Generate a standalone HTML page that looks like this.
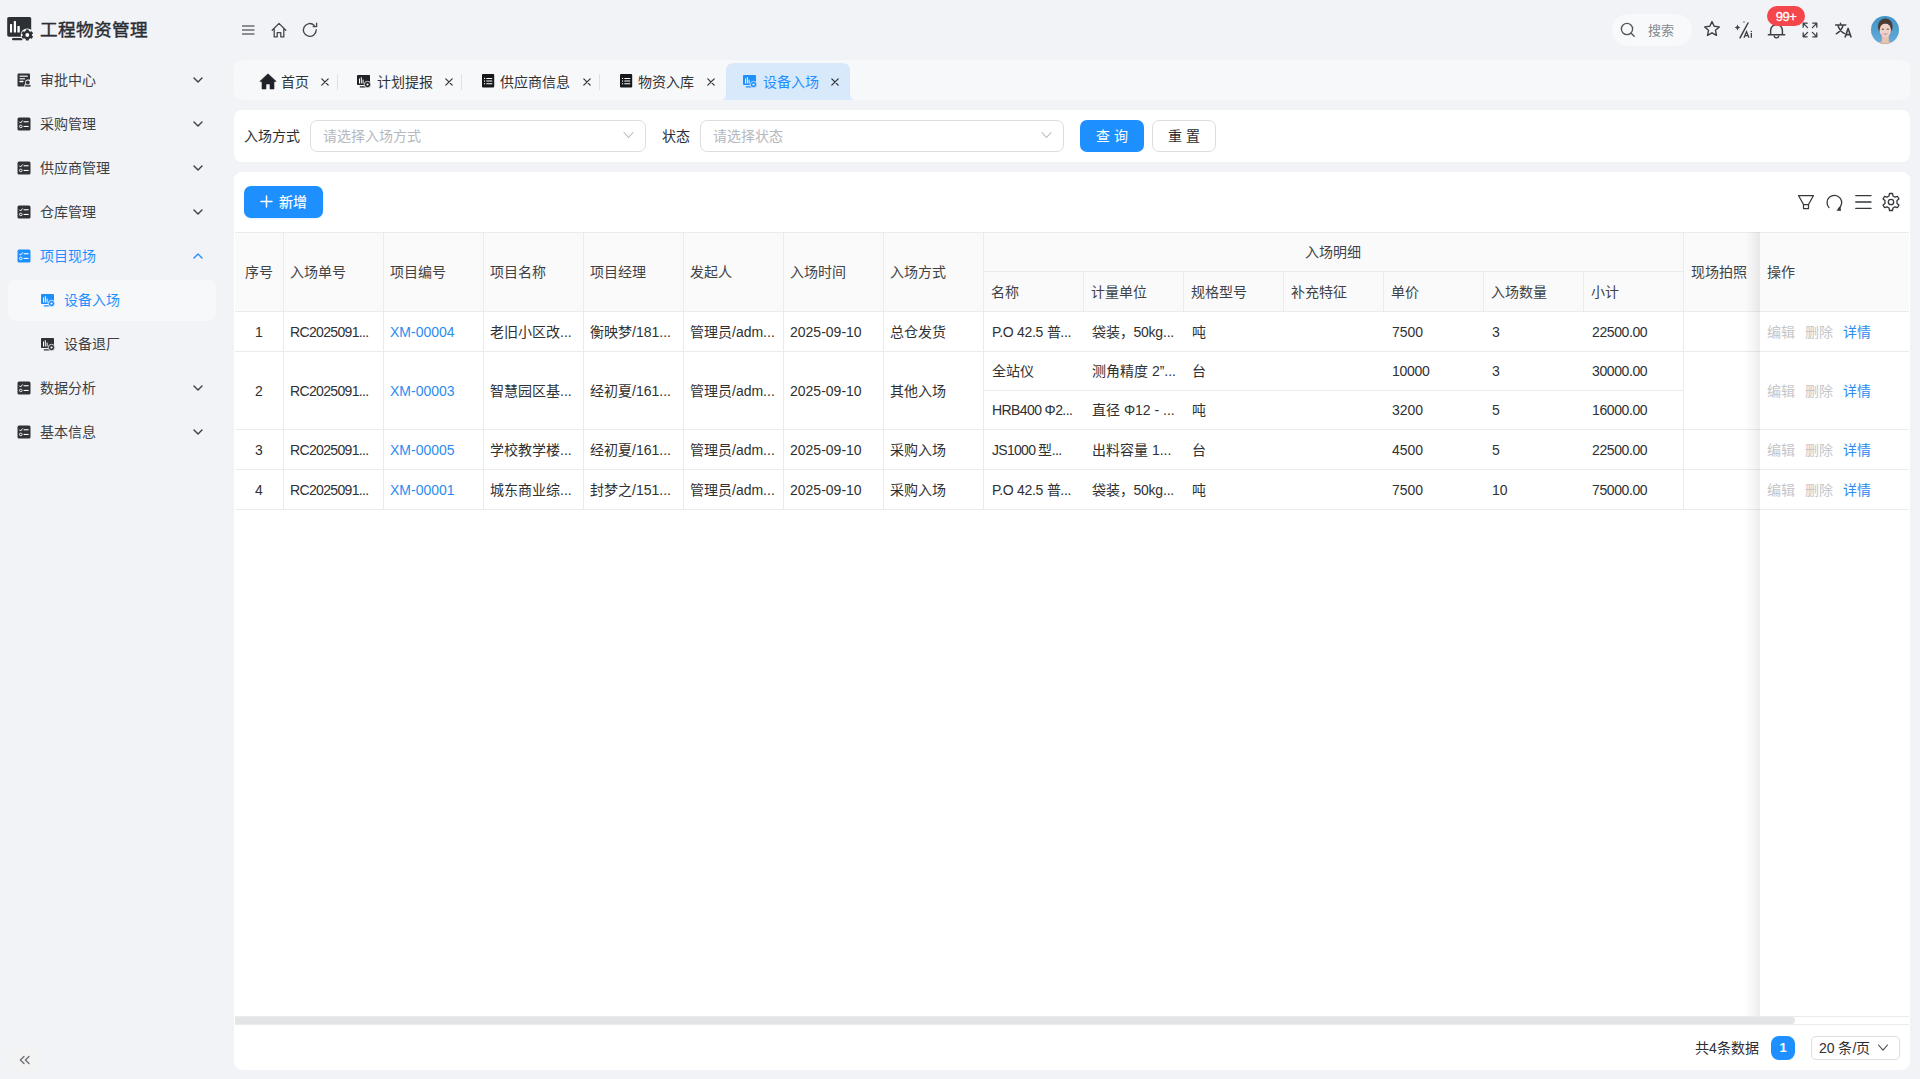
<!DOCTYPE html><html lang="zh-CN"><head><meta charset="utf-8"><style>
html,body{margin:0;padding:0;}
body{width:1920px;height:1079px;overflow:hidden;background:#f2f3f7;font-family:"Liberation Sans",sans-serif;position:relative;}
.t{position:absolute;white-space:nowrap;}
.r{position:absolute;}
.i{position:absolute;overflow:visible;}
</style></head><body>
<svg class="i" style="left:7px;top:17px;" width="27" height="25" viewBox="0 0 27 25"><rect x="0.2" y="0" width="24" height="19.7" rx="1.6" fill="#2d3136"/><rect x="3" y="7" width="2.1" height="8.5" rx="0.6" fill="#fff"/><rect x="6.8" y="4" width="2.2" height="11.5" rx="0.6" fill="#fff"/><rect x="10.4" y="9" width="2.4" height="6.5" rx="0.6" fill="#fff"/><rect x="5" y="21" width="11" height="2.3" rx="1.1" fill="#2d3136"/><g transform="translate(20.3,18)"><circle r="6.6" fill="#f2f3f7"/><path d="M-1.3 -5.4 L1.3 -5.4 L1.7 -3.9 L3 -3.2 L4.5 -3.8 L5.8 -1.6 L4.6 -0.6 L4.6 0.6 L5.8 1.6 L4.5 3.8 L3 3.2 L1.7 3.9 L1.3 5.4 L-1.3 5.4 L-1.7 3.9 L-3 3.2 L-4.5 3.8 L-5.8 1.6 L-4.6 0.6 L-4.6 -0.6 L-5.8 -1.6 L-4.5 -3.8 L-3 -3.2 L-1.7 -3.9 Z" fill="#2d3136"/><circle r="1.9" fill="#fff"/></g></svg>
<div class="t" style="left:40px;top:19.5px;height:20px;line-height:20px;font-size:17.6px;color:#2a2d31;font-weight:normal;-webkit-text-stroke:0.45px #2a2d31;">工程物资管理</div>
<svg class="i" style="left:17px;top:73px;" width="14" height="14" viewBox="0 0 14 14"><path d="M1.5 0.5 H12 Q13 0.5 13 1.5 V6.6 H10.6 Q8.2 6.6 8.2 9 V11.2 H7.4 V13.6 H1.5 Q0.5 13.6 0.5 12.6 V1.5 Q0.5 0.5 1.5 0.5 Z" fill="#2f3236"/><rect x="2.4" y="2.4" width="8.6" height="1.5" rx="0.7" fill="#fff" opacity="0.75"/><rect x="2.4" y="5" width="5.8" height="1.5" rx="0.7" fill="#fff" opacity="0.75"/><rect x="2.4" y="7.8" width="4.2" height="1.4" rx="0.7" fill="#fff"/><circle cx="10.8" cy="9.4" r="1.9" fill="#2f3236"/><rect x="8.2" y="11.8" width="5.3" height="1.9" rx="0.5" fill="#2f3236" opacity="0.85"/></svg>
<div class="t" style="left:40px;top:70.0px;height:20px;line-height:20px;font-size:14px;color:#3b3e42;font-weight:normal;">审批中心</div>
<svg class="i" style="left:192.5px;top:75px;" width="10" height="10" viewBox="0 0 10 10"><path d="M1 3 L5 7 L9 3" fill="none" stroke="#3a3d42" stroke-width="1.4" stroke-linecap="round" stroke-linejoin="round"/></svg>
<svg class="i" style="left:17px;top:117px;" width="14" height="14" viewBox="0 0 14 14"><rect x="0.5" y="0.5" width="13" height="13" rx="1.5" fill="#2f3236"/><path d="M2.6 5 L3.6 6 L5.4 3.8" fill="none" stroke="#fff" stroke-width="1" stroke-linecap="round"/><rect x="6.6" y="4.2" width="5" height="1.1" fill="#fff"/><circle cx="3.8" cy="9.4" r="1.3" fill="none" stroke="#fff" stroke-width="0.9"/><rect x="6.6" y="8.9" width="5" height="1.1" fill="#fff"/></svg>
<div class="t" style="left:40px;top:114.0px;height:20px;line-height:20px;font-size:14px;color:#3b3e42;font-weight:normal;">采购管理</div>
<svg class="i" style="left:192.5px;top:119px;" width="10" height="10" viewBox="0 0 10 10"><path d="M1 3 L5 7 L9 3" fill="none" stroke="#3a3d42" stroke-width="1.4" stroke-linecap="round" stroke-linejoin="round"/></svg>
<svg class="i" style="left:17px;top:161px;" width="14" height="14" viewBox="0 0 14 14"><rect x="0.5" y="0.5" width="13" height="13" rx="1.5" fill="#2f3236"/><path d="M2.6 5 L3.6 6 L5.4 3.8" fill="none" stroke="#fff" stroke-width="1" stroke-linecap="round"/><rect x="6.6" y="4.2" width="5" height="1.1" fill="#fff"/><circle cx="3.8" cy="9.4" r="1.3" fill="none" stroke="#fff" stroke-width="0.9"/><rect x="6.6" y="8.9" width="5" height="1.1" fill="#fff"/></svg>
<div class="t" style="left:40px;top:158.0px;height:20px;line-height:20px;font-size:14px;color:#3b3e42;font-weight:normal;">供应商管理</div>
<svg class="i" style="left:192.5px;top:163px;" width="10" height="10" viewBox="0 0 10 10"><path d="M1 3 L5 7 L9 3" fill="none" stroke="#3a3d42" stroke-width="1.4" stroke-linecap="round" stroke-linejoin="round"/></svg>
<svg class="i" style="left:17px;top:205px;" width="14" height="14" viewBox="0 0 14 14"><rect x="0.5" y="0.5" width="13" height="13" rx="1.5" fill="#2f3236"/><path d="M2.6 5 L3.6 6 L5.4 3.8" fill="none" stroke="#fff" stroke-width="1" stroke-linecap="round"/><rect x="6.6" y="4.2" width="5" height="1.1" fill="#fff"/><circle cx="3.8" cy="9.4" r="1.3" fill="none" stroke="#fff" stroke-width="0.9"/><rect x="6.6" y="8.9" width="5" height="1.1" fill="#fff"/></svg>
<div class="t" style="left:40px;top:202.0px;height:20px;line-height:20px;font-size:14px;color:#3b3e42;font-weight:normal;">仓库管理</div>
<svg class="i" style="left:192.5px;top:207px;" width="10" height="10" viewBox="0 0 10 10"><path d="M1 3 L5 7 L9 3" fill="none" stroke="#3a3d42" stroke-width="1.4" stroke-linecap="round" stroke-linejoin="round"/></svg>
<svg class="i" style="left:17px;top:249px;" width="14" height="14" viewBox="0 0 14 14"><rect x="0.5" y="0.5" width="13" height="13" rx="1.5" fill="#1e8ffe"/><path d="M2.6 5 L3.6 6 L5.4 3.8" fill="none" stroke="#fff" stroke-width="1" stroke-linecap="round"/><rect x="6.6" y="4.2" width="5" height="1.1" fill="#fff"/><circle cx="3.8" cy="9.4" r="1.3" fill="none" stroke="#fff" stroke-width="0.9"/><rect x="6.6" y="8.9" width="5" height="1.1" fill="#fff"/></svg>
<div class="t" style="left:40px;top:246.0px;height:20px;line-height:20px;font-size:14px;color:#1e8ffe;font-weight:normal;">项目现场</div>
<svg class="i" style="left:192.5px;top:251px;" width="10" height="10" viewBox="0 0 10 10"><path d="M1 7 L5 3 L9 7" fill="none" stroke="#1e8ffe" stroke-width="1.4" stroke-linecap="round" stroke-linejoin="round"/></svg>
<div class="r" style="left:8px;top:280px;width:208px;height:41px;background:#f7f8fa;border-radius:8px;"></div>
<svg class="i" style="left:41px;top:294px;" width="14" height="13" viewBox="0 0 14 13"><rect x="0" y="0" width="13" height="10" rx="0.8" fill="#1e8ffe"/><rect x="2" y="3.5" width="1" height="5" fill="#fff"/><rect x="3.8" y="2.2" width="1" height="6.3" fill="#fff"/><rect x="5.6" y="4.6" width="1" height="3.9" fill="#fff"/><rect x="2.6" y="11.2" width="6" height="1.2" rx="0.6" fill="#1e8ffe"/><circle cx="10.5" cy="9.5" r="3.2" fill="#1e8ffe" stroke="#f7f8fa" stroke-width="0.8"/><circle cx="10.5" cy="9.5" r="1.1" fill="#fff"/></svg>
<div class="t" style="left:64px;top:290.0px;height:20px;line-height:20px;font-size:14px;color:#1e8ffe;font-weight:normal;">设备入场</div>
<svg class="i" style="left:41px;top:338px;" width="14" height="13" viewBox="0 0 14 13"><rect x="0" y="0" width="13" height="10" rx="0.8" fill="#2f3236"/><rect x="2" y="3.5" width="1" height="5" fill="#fff"/><rect x="3.8" y="2.2" width="1" height="6.3" fill="#fff"/><rect x="5.6" y="4.6" width="1" height="3.9" fill="#fff"/><rect x="2.6" y="11.2" width="6" height="1.2" rx="0.6" fill="#2f3236"/><circle cx="10.5" cy="9.5" r="3.2" fill="#2f3236" stroke="#f2f3f7" stroke-width="0.8"/><circle cx="10.5" cy="9.5" r="1.1" fill="#fff"/></svg>
<div class="t" style="left:64px;top:334.0px;height:20px;line-height:20px;font-size:14px;color:#3b3e42;font-weight:normal;">设备退厂</div>
<svg class="i" style="left:17px;top:381px;" width="14" height="14" viewBox="0 0 14 14"><rect x="0.5" y="0.5" width="13" height="13" rx="1.5" fill="#2f3236"/><path d="M2.6 5 L3.6 6 L5.4 3.8" fill="none" stroke="#fff" stroke-width="1" stroke-linecap="round"/><rect x="6.6" y="4.2" width="5" height="1.1" fill="#fff"/><circle cx="3.8" cy="9.4" r="1.3" fill="none" stroke="#fff" stroke-width="0.9"/><rect x="6.6" y="8.9" width="5" height="1.1" fill="#fff"/></svg>
<div class="t" style="left:40px;top:378.0px;height:20px;line-height:20px;font-size:14px;color:#3b3e42;font-weight:normal;">数据分析</div>
<svg class="i" style="left:192.5px;top:383px;" width="10" height="10" viewBox="0 0 10 10"><path d="M1 3 L5 7 L9 3" fill="none" stroke="#3a3d42" stroke-width="1.4" stroke-linecap="round" stroke-linejoin="round"/></svg>
<svg class="i" style="left:17px;top:425px;" width="14" height="14" viewBox="0 0 14 14"><rect x="0.5" y="0.5" width="13" height="13" rx="1.5" fill="#2f3236"/><path d="M2.6 5 L3.6 6 L5.4 3.8" fill="none" stroke="#fff" stroke-width="1" stroke-linecap="round"/><rect x="6.6" y="4.2" width="5" height="1.1" fill="#fff"/><circle cx="3.8" cy="9.4" r="1.3" fill="none" stroke="#fff" stroke-width="0.9"/><rect x="6.6" y="8.9" width="5" height="1.1" fill="#fff"/></svg>
<div class="t" style="left:40px;top:422.0px;height:20px;line-height:20px;font-size:14px;color:#3b3e42;font-weight:normal;">基本信息</div>
<svg class="i" style="left:192.5px;top:427px;" width="10" height="10" viewBox="0 0 10 10"><path d="M1 3 L5 7 L9 3" fill="none" stroke="#3a3d42" stroke-width="1.4" stroke-linecap="round" stroke-linejoin="round"/></svg>
<div class="r" style="left:12px;top:1048px;width:24px;height:24px;background:#f3f3f4;border-radius:5px;"></div>
<svg class="i" style="left:19px;top:1055px;" width="11" height="10" viewBox="0 0 11 10"><path d="M5 1.4 L1.4 5 L5 8.6 M10 1.4 L6.4 5 L10 8.6" fill="none" stroke="#6f7378" stroke-width="1.45" stroke-linecap="round" stroke-linejoin="round"/></svg>
<svg class="i" style="left:242px;top:25px;" width="13" height="11" viewBox="0 0 13 11"><rect x="0" y="0.2" width="12.5" height="1.6" fill="#72777c"/><rect x="0" y="4.2" width="12.5" height="1.6" fill="#72777c"/><rect x="0" y="8.2" width="12.5" height="1.6" fill="#72777c"/></svg>
<svg class="i" style="left:271px;top:22px;" width="16" height="17" viewBox="0 0 16 17"><path d="M1.2 8.2 L8 1.4 L14.8 8.2 M3.2 6.6 V14.9 H6.2 V10.6 H9.8 V14.9 H12.8 V6.6" fill="none" stroke="#44484d" stroke-width="1.3" stroke-linejoin="round" stroke-linecap="round"/></svg>
<svg class="i" style="left:302px;top:22px;" width="16" height="16" viewBox="0 0 16 16"><path d="M14.2 7.8 A6.4 6.4 0 1 1 12.3 3.4" fill="none" stroke="#44484d" stroke-width="1.35" stroke-linecap="round"/><path d="M14.6 1.2 V4.6 H11.2" fill="none" stroke="#44484d" stroke-width="1.35" stroke-linecap="round" stroke-linejoin="round"/></svg>
<div class="r" style="left:1612px;top:14px;width:80px;height:32px;background:#f8f9fb;border-radius:16px;"></div>
<svg class="i" style="left:1620px;top:22px;" width="16" height="16" viewBox="0 0 16 16"><circle cx="7" cy="7" r="5.6" fill="none" stroke="#55595e" stroke-width="1.4"/><path d="M11.2 11.2 L14.2 14.2" stroke="#55595e" stroke-width="1.4" stroke-linecap="round"/></svg>
<div class="t" style="left:1648px;top:20.5px;height:20px;line-height:20px;font-size:13px;color:#85898e;font-weight:normal;">搜索</div>
<svg class="i" style="left:1703px;top:20px;" width="18" height="18" viewBox="0 0 18 18"><path d="M9 1.6 L11.2 6.3 L16.3 6.9 L12.5 10.3 L13.5 15.4 L9 12.8 L4.5 15.4 L5.5 10.3 L1.7 6.9 L6.8 6.3 Z" fill="none" stroke="#3c4045" stroke-width="1.4" stroke-linejoin="round"/></svg>
<svg class="i" style="left:1734px;top:20px;" width="20" height="19" viewBox="0 0 20 19"><path d="M6 17.8 L14 3" stroke="#3c4045" stroke-width="1.5" stroke-linecap="round"/><path d="M3.5 4.6 Q3.9 7 6.3 7.5 Q3.9 8 3.5 10.4 Q3.1 8 0.7 7.5 Q3.1 7 3.5 4.6 Z" fill="#3c4045"/><circle cx="10" cy="2" r="0.7" fill="#3c4045"/><path d="M10 17.8 L12.5 11.8 L15 17.8 M11 15.6 H14" fill="none" stroke="#3c4045" stroke-width="1.3"/><rect x="16.7" y="13" width="1.3" height="4.8" fill="#3c4045"/><circle cx="17.35" cy="11.4" r="0.75" fill="#3c4045"/></svg>
<svg class="i" style="left:1767px;top:22px;" width="19" height="17" viewBox="0 0 19 17"><path d="M3.6 12.6 V8.5 A5.9 5.9 0 0 1 15.4 8.5 V12.6" fill="none" stroke="#3c4045" stroke-width="1.45"/><path d="M1.4 12.8 H17.6" stroke="#3c4045" stroke-width="1.5" stroke-linecap="round"/><path d="M7.2 13.6 A2.3 2.3 0 0 0 11.8 13.6" fill="none" stroke="#3c4045" stroke-width="1.3"/></svg>
<div class="t" style="left:1767px;top:6px;width:38px;height:20px;border-radius:10px;background:#f5474b;color:#fff;font-size:13px;line-height:21px;text-align:center;letter-spacing:-0.5px;-webkit-text-stroke:0.3px #fff">99+</div>
<svg class="i" style="left:1802px;top:22px;" width="16" height="16" viewBox="0 0 16 16"><path d="M1.2 5.2 V1.2 H5.2 M1.2 1.2 L5.6 5.6 M10.8 1.2 H14.8 V5.2 M14.8 1.2 L10.4 5.6 M1.2 10.8 V14.8 H5.2 M1.2 14.8 L5.6 10.4 M14.8 10.8 V14.8 H10.8 M14.8 14.8 L10.4 10.4" fill="none" stroke="#3c4045" stroke-width="1.3" stroke-linecap="round" stroke-linejoin="round"/></svg>
<svg class="i" style="left:1835px;top:23px;" width="18" height="15" viewBox="0 0 18 15"><path d="M0.6 2 H10.8 M5.5 0.3 V2 M2.8 2 Q4.4 8 9.6 10.6 M8.2 2 Q6.6 8 1.2 10.8" fill="none" stroke="#3c4045" stroke-width="1.4" stroke-linecap="round"/><path d="M10 14.6 L13.1 5.4 L16.2 14.6 M11.1 11.6 H15.1" fill="none" stroke="#3c4045" stroke-width="1.6" stroke-linejoin="round"/></svg>
<svg class="i" style="left:1871px;top:16px;" width="28" height="28" viewBox="0 0 28 28"><defs><clipPath id="av"><circle cx="14" cy="14" r="14"/></clipPath><linearGradient id="avg" x1="0" y1="0" x2="0" y2="1"><stop offset="0" stop-color="#3f93c6"/><stop offset="1" stop-color="#67acdb"/></linearGradient></defs><g clip-path="url(#av)"><rect width="28" height="28" fill="url(#avg)"/><ellipse cx="14.3" cy="29.5" rx="9" ry="4.5" fill="#d7b19d"/><rect x="10.8" y="18" width="7" height="9" fill="#e8c4b3"/><ellipse cx="14.3" cy="10.5" rx="7.4" ry="8" fill="#4b3c36"/><ellipse cx="14.3" cy="14.2" rx="5.7" ry="6.9" fill="#f0d2c8"/><path d="M8.4 11.5 Q8.6 4.2 14.6 4.6 Q20.2 5 20 11 Q18.4 7.6 14.4 7.4 Q10.4 7.4 8.4 11.5 Z" fill="#4b3c36"/><ellipse cx="11.8" cy="13.2" rx="1.3" ry="0.6" fill="#6b5a55"/><ellipse cx="16.8" cy="13.2" rx="1.3" ry="0.6" fill="#6b5a55"/><path d="M11.2 17.2 Q14.3 20.6 17.4 17.2 Z" fill="#b86f73"/><path d="M12.2 17.5 Q14.3 18.6 16.4 17.5" stroke="#f6efe6" stroke-width="0.8" fill="none"/></g></svg>
<div class="r" style="left:234px;top:60px;width:1676px;height:40px;background:#f7f8fa;border-radius:8px;"></div>
<svg class="i" style="left:720px;top:62px" width="136" height="38" viewBox="0 0 136 38"><path d="M0 38 Q6 38 6 32 V9 Q6 1 14 1 H122 Q130 1 130 9 V32 Q130 38 136 38 Z" fill="#d8e9fb"/></svg>
<svg class="i" style="left:259px;top:73px;" width="18" height="17" viewBox="0 0 18 17"><path d="M9 0.8 L17.2 8.4 H15 V16 H11 V11 H7 V16 H3 V8.4 H0.8 Z" fill="#1f2226" stroke="#1f2226" stroke-width="0.6" stroke-linejoin="round"/></svg>
<div class="t" style="left:281px;top:71.5px;height:20px;line-height:20px;font-size:14px;color:#303236;font-weight:normal;">首页</div>
<svg class="i" style="left:321px;top:78px;" width="8" height="8" viewBox="0 0 8 8"><path d="M0.8 0.8 L7.2 7.2 M7.2 0.8 L0.8 7.2" stroke="#303133" stroke-width="1.2" stroke-linecap="round"/></svg>
<div class="r" style="left:337px;top:74px;width:1px;height:16px;background:#dfe1e5;"></div>
<svg class="i" style="left:357px;top:75px;" width="14" height="13" viewBox="0 0 14 13"><rect x="0" y="0" width="13" height="10" rx="0.8" fill="#1f2226"/><rect x="2" y="3.5" width="1" height="5" fill="#fff"/><rect x="3.8" y="2.2" width="1" height="6.3" fill="#fff"/><rect x="5.6" y="4.6" width="1" height="3.9" fill="#fff"/><rect x="2.6" y="11.2" width="6" height="1.2" rx="0.6" fill="#1f2226"/><circle cx="10.5" cy="9.5" r="3.2" fill="#1f2226" stroke="#f7f8fa" stroke-width="0.8"/><circle cx="10.5" cy="9.5" r="1.1" fill="#fff"/></svg>
<div class="t" style="left:377px;top:71.5px;height:20px;line-height:20px;font-size:14px;color:#303236;font-weight:normal;">计划提报</div>
<svg class="i" style="left:445px;top:78px;" width="8" height="8" viewBox="0 0 8 8"><path d="M0.8 0.8 L7.2 7.2 M7.2 0.8 L0.8 7.2" stroke="#303133" stroke-width="1.2" stroke-linecap="round"/></svg>
<div class="r" style="left:461px;top:74px;width:1px;height:16px;background:#dfe1e5;"></div>
<svg class="i" style="left:482px;top:74px;" width="13" height="14" viewBox="0 0 13 14"><rect x="0" y="0" width="12.2" height="13.4" rx="1" fill="#16181c"/><rect x="2" y="3.9" width="1.1" height="1.1" fill="#fff"/><rect x="4.2" y="3.9" width="6.2" height="1.1" rx="0.5" fill="#fff"/><rect x="2" y="6.5" width="1.1" height="1.1" fill="#fff"/><rect x="4.2" y="6.5" width="6.2" height="1.1" rx="0.5" fill="#fff"/><rect x="2" y="9.2" width="1.1" height="1.1" fill="#fff"/><rect x="4.2" y="9.2" width="6.2" height="1.1" rx="0.5" fill="#fff"/></svg>
<div class="t" style="left:500px;top:71.5px;height:20px;line-height:20px;font-size:14px;color:#303236;font-weight:normal;">供应商信息</div>
<svg class="i" style="left:583px;top:78px;" width="8" height="8" viewBox="0 0 8 8"><path d="M0.8 0.8 L7.2 7.2 M7.2 0.8 L0.8 7.2" stroke="#303133" stroke-width="1.2" stroke-linecap="round"/></svg>
<div class="r" style="left:599px;top:74px;width:1px;height:16px;background:#dfe1e5;"></div>
<svg class="i" style="left:620px;top:74px;" width="13" height="14" viewBox="0 0 13 14"><rect x="0" y="0" width="12.2" height="13.4" rx="1" fill="#16181c"/><rect x="2" y="3.9" width="1.1" height="1.1" fill="#fff"/><rect x="4.2" y="3.9" width="6.2" height="1.1" rx="0.5" fill="#fff"/><rect x="2" y="6.5" width="1.1" height="1.1" fill="#fff"/><rect x="4.2" y="6.5" width="6.2" height="1.1" rx="0.5" fill="#fff"/><rect x="2" y="9.2" width="1.1" height="1.1" fill="#fff"/><rect x="4.2" y="9.2" width="6.2" height="1.1" rx="0.5" fill="#fff"/></svg>
<div class="t" style="left:638px;top:71.5px;height:20px;line-height:20px;font-size:14px;color:#303236;font-weight:normal;">物资入库</div>
<svg class="i" style="left:707px;top:78px;" width="8" height="8" viewBox="0 0 8 8"><path d="M0.8 0.8 L7.2 7.2 M7.2 0.8 L0.8 7.2" stroke="#303133" stroke-width="1.2" stroke-linecap="round"/></svg>
<svg class="i" style="left:743px;top:75px;" width="14" height="13" viewBox="0 0 14 13"><rect x="0" y="0" width="13" height="10" rx="0.8" fill="#1e8ffe"/><rect x="2" y="3.5" width="1" height="5" fill="#fff"/><rect x="3.8" y="2.2" width="1" height="6.3" fill="#fff"/><rect x="5.6" y="4.6" width="1" height="3.9" fill="#fff"/><rect x="2.6" y="11.2" width="6" height="1.2" rx="0.6" fill="#1e8ffe"/><circle cx="10.5" cy="9.5" r="3.2" fill="#1e8ffe" stroke="#d8e9fb" stroke-width="0.8"/><circle cx="10.5" cy="9.5" r="1.1" fill="#fff"/></svg>
<div class="t" style="left:763px;top:71.5px;height:20px;line-height:20px;font-size:14px;color:#1e8ffe;font-weight:normal;">设备入场</div>
<svg class="i" style="left:831px;top:78px;" width="8" height="8" viewBox="0 0 8 8"><path d="M0.8 0.8 L7.2 7.2 M7.2 0.8 L0.8 7.2" stroke="#2a2d31" stroke-width="1.2" stroke-linecap="round"/></svg>
<div class="r" style="left:234px;top:110px;width:1676px;height:52px;background:#fff;border-radius:8px;"></div>
<div class="t" style="left:244px;top:126.0px;height:20px;line-height:20px;font-size:14px;color:#2b2e32;font-weight:normal;">入场方式</div>
<div class="r" style="left:310px;top:120px;width:334px;height:30px;border:1px solid #dddee2;border-radius:7px;background:#fff"></div>
<div class="t" style="left:323px;top:126.0px;height:20px;line-height:20px;font-size:14px;color:#b5b8bd;font-weight:normal;">请选择入场方式</div>
<svg class="i" style="left:623px;top:130px;" width="11" height="10" viewBox="0 0 11 10"><path d="M1 2.5 L5.5 7.5 L10 2.5" fill="none" stroke="#b5b8bd" stroke-width="1.1" stroke-linecap="round" stroke-linejoin="round"/></svg>
<div class="t" style="left:662px;top:126.0px;height:20px;line-height:20px;font-size:14px;color:#2b2e32;font-weight:normal;">状态</div>
<div class="r" style="left:700px;top:120px;width:362px;height:30px;border:1px solid #dddee2;border-radius:7px;background:#fff"></div>
<div class="t" style="left:713px;top:126.0px;height:20px;line-height:20px;font-size:14px;color:#b5b8bd;font-weight:normal;">请选择状态</div>
<svg class="i" style="left:1041px;top:130px;" width="11" height="10" viewBox="0 0 11 10"><path d="M1 2.5 L5.5 7.5 L10 2.5" fill="none" stroke="#b5b8bd" stroke-width="1.1" stroke-linecap="round" stroke-linejoin="round"/></svg>
<div class="t" style="left:1080px;top:120px;width:64px;height:32px;border-radius:7px;background:#1e8ffe;color:#fff;font-size:14px;line-height:32px;text-align:center;letter-spacing:4px;text-indent:4px">查询</div>
<div class="t" style="left:1152px;top:120px;width:62px;height:30px;border:1px solid #dddee2;border-radius:7px;background:#fff;color:#2b2e32;font-size:14px;line-height:30px;text-align:center;letter-spacing:4px;text-indent:4px">重置</div>
<div class="r" style="left:234px;top:172px;width:1676px;height:898px;background:#fff;border-radius:8px;"></div>
<div class="r" style="left:244px;top:186px;width:79px;height:32px;border-radius:7px;background:#1e8ffe;box-shadow:0 1px 2px rgba(30,143,254,0.12)"></div>
<svg class="i" style="left:260px;top:195px;" width="13" height="13" viewBox="0 0 13 13"><path d="M6.5 1 V12 M1 6.5 H12" stroke="#fff" stroke-width="1.5" stroke-linecap="round"/></svg>
<div class="t" style="left:279px;top:191.5px;height:20px;line-height:20px;font-size:14px;color:#fff;font-weight:normal;-webkit-text-stroke:0.2px #fff;">新增</div>
<svg class="i" style="left:1797px;top:194px;" width="18" height="16" viewBox="0 0 18 16"><path d="M1.5 1.5 H16.5 L11.5 10.5 V14.5 H6.5 V10.5 Z M6.5 10.5 H11.5" fill="none" stroke="#35383d" stroke-width="1.25" stroke-linejoin="round"/></svg>
<svg class="i" style="left:1825px;top:193px;" width="18" height="18" viewBox="0 0 18 18"><path d="M4 14.6 A7.3 7.3 0 1 1 13.6 15.6" fill="none" stroke="#35383d" stroke-width="1.3" stroke-linecap="round"/><path d="M11.2 17.6 L15.6 13.6 L15.9 17.9 Z" fill="#35383d"/></svg>
<svg class="i" style="left:1855px;top:194px;" width="17" height="16" viewBox="0 0 17 16"><path d="M0.8 1.6 H16 M0.8 8 H16 M0.8 14.4 H16" stroke="#35383d" stroke-width="1.4" stroke-linecap="round"/></svg>
<svg class="i" style="left:1881px;top:192px;" width="20" height="20" viewBox="0 0 20 20"><path d="M8.5 1.5 H11.5 L12 4 L14 5.1 L16.4 4.3 L17.9 6.9 L16 8.6 V11.4 L17.9 13.1 L16.4 15.7 L14 14.9 L12 16 L11.5 18.5 H8.5 L8 16 L6 14.9 L3.6 15.7 L2.1 13.1 L4 11.4 V8.6 L2.1 6.9 L3.6 4.3 L6 5.1 L8 4 Z" fill="none" stroke="#35383d" stroke-width="1.3" stroke-linejoin="round"/><circle cx="10" cy="10" r="2.7" fill="none" stroke="#35383d" stroke-width="1.3"/></svg>
<div class="r" style="left:235px;top:232px;width:1674px;height:79px;background:#fafafa;"></div>
<div class="r" style="left:235px;top:232px;width:1674px;height:1px;background:#ebebeb;"></div>
<div class="r" style="left:235px;top:311px;width:1674px;height:1px;background:#ebebeb;"></div>
<div class="r" style="left:235px;top:351px;width:1674px;height:1px;background:#ebebeb;"></div>
<div class="r" style="left:235px;top:429px;width:1674px;height:1px;background:#ebebeb;"></div>
<div class="r" style="left:235px;top:469px;width:1674px;height:1px;background:#ebebeb;"></div>
<div class="r" style="left:235px;top:509px;width:1674px;height:1px;background:#ebebeb;"></div>
<div class="r" style="left:983px;top:271px;width:700px;height:1px;background:#ebebeb;"></div>
<div class="r" style="left:983px;top:390px;width:700px;height:1px;background:#ebebeb;"></div>
<div class="r" style="left:283px;top:233px;width:1px;height:276px;background:#ebebeb;"></div>
<div class="r" style="left:383px;top:233px;width:1px;height:276px;background:#ebebeb;"></div>
<div class="r" style="left:483px;top:233px;width:1px;height:276px;background:#ebebeb;"></div>
<div class="r" style="left:583px;top:233px;width:1px;height:276px;background:#ebebeb;"></div>
<div class="r" style="left:683px;top:233px;width:1px;height:276px;background:#ebebeb;"></div>
<div class="r" style="left:783px;top:233px;width:1px;height:276px;background:#ebebeb;"></div>
<div class="r" style="left:883px;top:233px;width:1px;height:276px;background:#ebebeb;"></div>
<div class="r" style="left:983px;top:233px;width:1px;height:276px;background:#ebebeb;"></div>
<div class="r" style="left:1083px;top:272px;width:1px;height:39px;background:#ebebeb;"></div>
<div class="r" style="left:1183px;top:272px;width:1px;height:39px;background:#ebebeb;"></div>
<div class="r" style="left:1283px;top:272px;width:1px;height:39px;background:#ebebeb;"></div>
<div class="r" style="left:1383px;top:272px;width:1px;height:39px;background:#ebebeb;"></div>
<div class="r" style="left:1483px;top:272px;width:1px;height:39px;background:#ebebeb;"></div>
<div class="r" style="left:1583px;top:272px;width:1px;height:39px;background:#ebebeb;"></div>
<div class="r" style="left:1683px;top:233px;width:1px;height:276px;background:#ebebeb;"></div>
<div class="t" style="left:235px;width:48px;text-align:center;top:262.0px;height:20px;line-height:20px;font-size:14px;color:#404245;">序号</div>
<div class="t" style="left:290px;top:262.0px;height:20px;line-height:20px;font-size:14px;color:#404245;font-weight:normal;">入场单号</div>
<div class="t" style="left:390px;top:262.0px;height:20px;line-height:20px;font-size:14px;color:#404245;font-weight:normal;">项目编号</div>
<div class="t" style="left:490px;top:262.0px;height:20px;line-height:20px;font-size:14px;color:#404245;font-weight:normal;">项目名称</div>
<div class="t" style="left:590px;top:262.0px;height:20px;line-height:20px;font-size:14px;color:#404245;font-weight:normal;">项目经理</div>
<div class="t" style="left:690px;top:262.0px;height:20px;line-height:20px;font-size:14px;color:#404245;font-weight:normal;">发起人</div>
<div class="t" style="left:790px;top:262.0px;height:20px;line-height:20px;font-size:14px;color:#404245;font-weight:normal;">入场时间</div>
<div class="t" style="left:890px;top:262.0px;height:20px;line-height:20px;font-size:14px;color:#404245;font-weight:normal;">入场方式</div>
<div class="t" style="left:983px;width:700px;text-align:center;top:242.0px;height:20px;line-height:20px;font-size:14px;color:#404245;">入场明细</div>
<div class="t" style="left:991px;top:282.0px;height:20px;line-height:20px;font-size:14px;color:#404245;font-weight:normal;">名称</div>
<div class="t" style="left:1091px;top:282.0px;height:20px;line-height:20px;font-size:14px;color:#404245;font-weight:normal;">计量单位</div>
<div class="t" style="left:1191px;top:282.0px;height:20px;line-height:20px;font-size:14px;color:#404245;font-weight:normal;">规格型号</div>
<div class="t" style="left:1291px;top:282.0px;height:20px;line-height:20px;font-size:14px;color:#404245;font-weight:normal;">补充特征</div>
<div class="t" style="left:1391px;top:282.0px;height:20px;line-height:20px;font-size:14px;color:#404245;font-weight:normal;">单价</div>
<div class="t" style="left:1491px;top:282.0px;height:20px;line-height:20px;font-size:14px;color:#404245;font-weight:normal;">入场数量</div>
<div class="t" style="left:1591px;top:282.0px;height:20px;line-height:20px;font-size:14px;color:#404245;font-weight:normal;">小计</div>
<div class="t" style="left:1691px;top:262.0px;height:20px;line-height:20px;font-size:14px;color:#404245;font-weight:normal;">现场拍照</div>
<div class="t" style="left:235px;width:48px;text-align:center;top:321.5px;height:20px;line-height:20px;font-size:14px;color:#303133;">1</div>
<div class="t" style="left:290px;top:321.5px;height:20px;line-height:20px;font-size:14px;color:#303133;font-weight:normal;letter-spacing:-0.65px;">RC2025091...</div>
<div class="t" style="left:390px;top:321.5px;height:20px;line-height:20px;font-size:14px;color:#2d8cf0;font-weight:normal;">XM-00004</div>
<div class="t" style="left:490px;top:321.5px;height:20px;line-height:20px;font-size:14px;color:#303133;font-weight:normal;">老旧小区改...</div>
<div class="t" style="left:590px;top:321.5px;height:20px;line-height:20px;font-size:14px;color:#303133;font-weight:normal;">衡映梦/181...</div>
<div class="t" style="left:690px;top:321.5px;height:20px;line-height:20px;font-size:14px;color:#303133;font-weight:normal;">管理员/adm...</div>
<div class="t" style="left:790px;top:321.5px;height:20px;line-height:20px;font-size:14px;color:#303133;font-weight:normal;">2025-09-10</div>
<div class="t" style="left:890px;top:321.5px;height:20px;line-height:20px;font-size:14px;color:#303133;font-weight:normal;">总仓发货</div>
<div class="t" style="left:992px;top:321.5px;height:20px;line-height:20px;font-size:14px;color:#303133;font-weight:normal;letter-spacing:-0.3px;">P.O 42.5 普...</div>
<div class="t" style="left:1092px;top:321.5px;height:20px;line-height:20px;font-size:14px;color:#303133;font-weight:normal;letter-spacing:-0.2px;">袋装，50kg...</div>
<div class="t" style="left:1192px;top:321.5px;height:20px;line-height:20px;font-size:14px;color:#303133;font-weight:normal;">吨</div>
<div class="t" style="left:1392px;top:321.5px;height:20px;line-height:20px;font-size:14px;color:#303133;font-weight:normal;">7500</div>
<div class="t" style="left:1492px;top:321.5px;height:20px;line-height:20px;font-size:14px;color:#303133;font-weight:normal;">3</div>
<div class="t" style="left:1592px;top:321.5px;height:20px;line-height:20px;font-size:14px;color:#303133;font-weight:normal;letter-spacing:-0.4px;">22500.00</div>
<div class="t" style="left:235px;width:48px;text-align:center;top:380.5px;height:20px;line-height:20px;font-size:14px;color:#303133;">2</div>
<div class="t" style="left:290px;top:380.5px;height:20px;line-height:20px;font-size:14px;color:#303133;font-weight:normal;letter-spacing:-0.65px;">RC2025091...</div>
<div class="t" style="left:390px;top:380.5px;height:20px;line-height:20px;font-size:14px;color:#2d8cf0;font-weight:normal;">XM-00003</div>
<div class="t" style="left:490px;top:380.5px;height:20px;line-height:20px;font-size:14px;color:#303133;font-weight:normal;">智慧园区基...</div>
<div class="t" style="left:590px;top:380.5px;height:20px;line-height:20px;font-size:14px;color:#303133;font-weight:normal;">经初夏/161...</div>
<div class="t" style="left:690px;top:380.5px;height:20px;line-height:20px;font-size:14px;color:#303133;font-weight:normal;">管理员/adm...</div>
<div class="t" style="left:790px;top:380.5px;height:20px;line-height:20px;font-size:14px;color:#303133;font-weight:normal;">2025-09-10</div>
<div class="t" style="left:890px;top:380.5px;height:20px;line-height:20px;font-size:14px;color:#303133;font-weight:normal;">其他入场</div>
<div class="t" style="left:992px;top:361.0px;height:20px;line-height:20px;font-size:14px;color:#303133;font-weight:normal;">全站仪</div>
<div class="t" style="left:1092px;top:361.0px;height:20px;line-height:20px;font-size:14px;color:#303133;font-weight:normal;">测角精度 2”...</div>
<div class="t" style="left:1192px;top:361.0px;height:20px;line-height:20px;font-size:14px;color:#303133;font-weight:normal;">台</div>
<div class="t" style="left:1392px;top:361.0px;height:20px;line-height:20px;font-size:14px;color:#303133;font-weight:normal;letter-spacing:-0.3px;">10000</div>
<div class="t" style="left:1492px;top:361.0px;height:20px;line-height:20px;font-size:14px;color:#303133;font-weight:normal;">3</div>
<div class="t" style="left:1592px;top:361.0px;height:20px;line-height:20px;font-size:14px;color:#303133;font-weight:normal;letter-spacing:-0.4px;">30000.00</div>
<div class="t" style="left:992px;top:400.0px;height:20px;line-height:20px;font-size:14px;color:#303133;font-weight:normal;letter-spacing:-0.6px;">HRB400 Φ2...</div>
<div class="t" style="left:1092px;top:400.0px;height:20px;line-height:20px;font-size:14px;color:#303133;font-weight:normal;">直径 Φ12 - ...</div>
<div class="t" style="left:1192px;top:400.0px;height:20px;line-height:20px;font-size:14px;color:#303133;font-weight:normal;">吨</div>
<div class="t" style="left:1392px;top:400.0px;height:20px;line-height:20px;font-size:14px;color:#303133;font-weight:normal;">3200</div>
<div class="t" style="left:1492px;top:400.0px;height:20px;line-height:20px;font-size:14px;color:#303133;font-weight:normal;">5</div>
<div class="t" style="left:1592px;top:400.0px;height:20px;line-height:20px;font-size:14px;color:#303133;font-weight:normal;letter-spacing:-0.4px;">16000.00</div>
<div class="t" style="left:235px;width:48px;text-align:center;top:439.5px;height:20px;line-height:20px;font-size:14px;color:#303133;">3</div>
<div class="t" style="left:290px;top:439.5px;height:20px;line-height:20px;font-size:14px;color:#303133;font-weight:normal;letter-spacing:-0.65px;">RC2025091...</div>
<div class="t" style="left:390px;top:439.5px;height:20px;line-height:20px;font-size:14px;color:#2d8cf0;font-weight:normal;">XM-00005</div>
<div class="t" style="left:490px;top:439.5px;height:20px;line-height:20px;font-size:14px;color:#303133;font-weight:normal;">学校教学楼...</div>
<div class="t" style="left:590px;top:439.5px;height:20px;line-height:20px;font-size:14px;color:#303133;font-weight:normal;">经初夏/161...</div>
<div class="t" style="left:690px;top:439.5px;height:20px;line-height:20px;font-size:14px;color:#303133;font-weight:normal;">管理员/adm...</div>
<div class="t" style="left:790px;top:439.5px;height:20px;line-height:20px;font-size:14px;color:#303133;font-weight:normal;">2025-09-10</div>
<div class="t" style="left:890px;top:439.5px;height:20px;line-height:20px;font-size:14px;color:#303133;font-weight:normal;">采购入场</div>
<div class="t" style="left:992px;top:439.5px;height:20px;line-height:20px;font-size:14px;color:#303133;font-weight:normal;letter-spacing:-0.7px;">JS1000 型...</div>
<div class="t" style="left:1092px;top:439.5px;height:20px;line-height:20px;font-size:14px;color:#303133;font-weight:normal;">出料容量 1...</div>
<div class="t" style="left:1192px;top:439.5px;height:20px;line-height:20px;font-size:14px;color:#303133;font-weight:normal;">台</div>
<div class="t" style="left:1392px;top:439.5px;height:20px;line-height:20px;font-size:14px;color:#303133;font-weight:normal;">4500</div>
<div class="t" style="left:1492px;top:439.5px;height:20px;line-height:20px;font-size:14px;color:#303133;font-weight:normal;">5</div>
<div class="t" style="left:1592px;top:439.5px;height:20px;line-height:20px;font-size:14px;color:#303133;font-weight:normal;letter-spacing:-0.4px;">22500.00</div>
<div class="t" style="left:235px;width:48px;text-align:center;top:479.5px;height:20px;line-height:20px;font-size:14px;color:#303133;">4</div>
<div class="t" style="left:290px;top:479.5px;height:20px;line-height:20px;font-size:14px;color:#303133;font-weight:normal;letter-spacing:-0.65px;">RC2025091...</div>
<div class="t" style="left:390px;top:479.5px;height:20px;line-height:20px;font-size:14px;color:#2d8cf0;font-weight:normal;">XM-00001</div>
<div class="t" style="left:490px;top:479.5px;height:20px;line-height:20px;font-size:14px;color:#303133;font-weight:normal;">城东商业综...</div>
<div class="t" style="left:590px;top:479.5px;height:20px;line-height:20px;font-size:14px;color:#303133;font-weight:normal;">封梦之/151...</div>
<div class="t" style="left:690px;top:479.5px;height:20px;line-height:20px;font-size:14px;color:#303133;font-weight:normal;">管理员/adm...</div>
<div class="t" style="left:790px;top:479.5px;height:20px;line-height:20px;font-size:14px;color:#303133;font-weight:normal;">2025-09-10</div>
<div class="t" style="left:890px;top:479.5px;height:20px;line-height:20px;font-size:14px;color:#303133;font-weight:normal;">采购入场</div>
<div class="t" style="left:992px;top:479.5px;height:20px;line-height:20px;font-size:14px;color:#303133;font-weight:normal;letter-spacing:-0.3px;">P.O 42.5 普...</div>
<div class="t" style="left:1092px;top:479.5px;height:20px;line-height:20px;font-size:14px;color:#303133;font-weight:normal;letter-spacing:-0.2px;">袋装，50kg...</div>
<div class="t" style="left:1192px;top:479.5px;height:20px;line-height:20px;font-size:14px;color:#303133;font-weight:normal;">吨</div>
<div class="t" style="left:1392px;top:479.5px;height:20px;line-height:20px;font-size:14px;color:#303133;font-weight:normal;">7500</div>
<div class="t" style="left:1492px;top:479.5px;height:20px;line-height:20px;font-size:14px;color:#303133;font-weight:normal;">10</div>
<div class="t" style="left:1592px;top:479.5px;height:20px;line-height:20px;font-size:14px;color:#303133;font-weight:normal;letter-spacing:-0.4px;">75000.00</div>
<div class="r" style="left:1745px;top:232px;width:15px;height:784px;background:linear-gradient(to left, rgba(0,0,0,0.07), rgba(0,0,0,0));"></div>
<div class="r" style="left:1760px;top:232px;width:149px;height:784px;background:#fff;"></div>
<div class="r" style="left:1760px;top:233px;width:149px;height:78px;background:#fafafa;"></div>
<div class="r" style="left:1760px;top:232px;width:149px;height:1px;background:#ebebeb;"></div>
<div class="r" style="left:1760px;top:311px;width:149px;height:1px;background:#ebebeb;"></div>
<div class="r" style="left:1760px;top:351px;width:149px;height:1px;background:#ebebeb;"></div>
<div class="r" style="left:1760px;top:429px;width:149px;height:1px;background:#ebebeb;"></div>
<div class="r" style="left:1760px;top:469px;width:149px;height:1px;background:#ebebeb;"></div>
<div class="r" style="left:1760px;top:509px;width:149px;height:1px;background:#ebebeb;"></div>
<div class="t" style="left:1767px;top:262.0px;height:20px;line-height:20px;font-size:14px;color:#404245;font-weight:normal;">操作</div>
<div class="t" style="left:1767px;top:321.5px;height:20px;line-height:20px;font-size:14px;color:#c4c6ca;font-weight:normal;">编辑</div>
<div class="t" style="left:1805px;top:321.5px;height:20px;line-height:20px;font-size:14px;color:#c4c6ca;font-weight:normal;">删除</div>
<div class="t" style="left:1843px;top:321.5px;height:20px;line-height:20px;font-size:14px;color:#2d8cf0;font-weight:normal;">详情</div>
<div class="t" style="left:1767px;top:380.5px;height:20px;line-height:20px;font-size:14px;color:#c4c6ca;font-weight:normal;">编辑</div>
<div class="t" style="left:1805px;top:380.5px;height:20px;line-height:20px;font-size:14px;color:#c4c6ca;font-weight:normal;">删除</div>
<div class="t" style="left:1843px;top:380.5px;height:20px;line-height:20px;font-size:14px;color:#2d8cf0;font-weight:normal;">详情</div>
<div class="t" style="left:1767px;top:439.5px;height:20px;line-height:20px;font-size:14px;color:#c4c6ca;font-weight:normal;">编辑</div>
<div class="t" style="left:1805px;top:439.5px;height:20px;line-height:20px;font-size:14px;color:#c4c6ca;font-weight:normal;">删除</div>
<div class="t" style="left:1843px;top:439.5px;height:20px;line-height:20px;font-size:14px;color:#2d8cf0;font-weight:normal;">详情</div>
<div class="t" style="left:1767px;top:479.5px;height:20px;line-height:20px;font-size:14px;color:#c4c6ca;font-weight:normal;">编辑</div>
<div class="t" style="left:1805px;top:479.5px;height:20px;line-height:20px;font-size:14px;color:#c4c6ca;font-weight:normal;">删除</div>
<div class="t" style="left:1843px;top:479.5px;height:20px;line-height:20px;font-size:14px;color:#2d8cf0;font-weight:normal;">详情</div>
<div class="r" style="left:235px;top:1016px;width:1674px;height:1px;background:#ebebeb;"></div>
<div class="r" style="left:235px;top:1017px;width:1560px;height:7px;background:#e3e4e6;border-radius:0 4px 4px 0;"></div>
<div class="r" style="left:235px;top:1024px;width:1674px;height:1px;background:#ebebeb;"></div>
<div class="t" style="left:1695px;top:1038.0px;height:20px;line-height:20px;font-size:14px;color:#2b2e32;font-weight:normal;">共4条数据</div>
<div class="t" style="left:1771px;top:1036px;width:24px;height:24px;border-radius:8px;background:#1e8ffe;color:#fff;font-size:13px;font-weight:bold;line-height:24px;text-align:center">1</div>
<div class="r" style="left:1811px;top:1036px;width:87px;height:22px;border:1px solid #dddee2;border-radius:5px;background:#fff"></div>
<div class="t" style="left:1819px;top:1038.0px;height:20px;line-height:20px;font-size:14px;color:#2b2e32;font-weight:normal;">20 条/页</div>
<svg class="i" style="left:1877px;top:1043px;" width="12" height="9" viewBox="0 0 12 9"><path d="M1.5 2 L6 7.2 L10.5 2" fill="none" stroke="#44484d" stroke-width="1.1" stroke-linecap="round" stroke-linejoin="round"/></svg>
</body></html>
